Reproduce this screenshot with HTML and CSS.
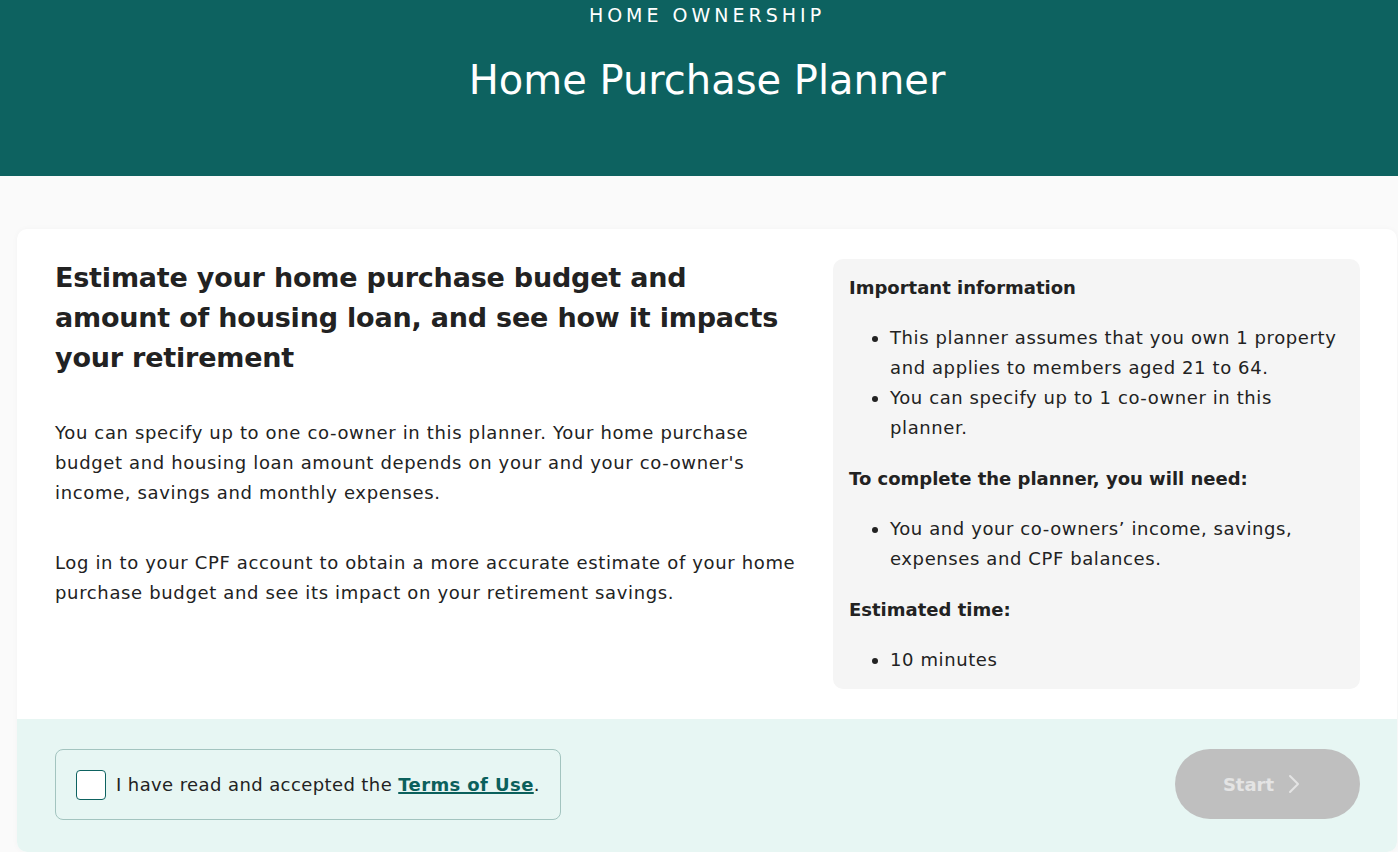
FILE: index.html
```html
<!DOCTYPE html>
<html lang="en">
<head>
    <meta charset="UTF-8">
    <meta name="viewport" content="width=device-width, initial-scale=1.0">
    <title>Home Purchase Planner</title>
    <link rel="stylesheet" href="styles.css">
</head>
<body>
    <header class="banner">
        <p class="eyebrow">HOME OWNERSHIP</p>
        <h1>Home Purchase Planner</h1>
    </header>

    <main class="page">
        <div class="card">
            <div class="cardBody">
                <section class="intro">
                    <h2>Estimate your home purchase budget and amount of housing loan, and see how it impacts your retirement</h2>
                    <p>You can specify up to one co-owner in this planner. Your home purchase budget and housing loan amount depends on your and your co-owner's income, savings and monthly expenses.</p>
                    <p>Log in to your CPF account to obtain a more accurate estimate of your home purchase budget and see its impact on your retirement savings.</p>
                </section>
                <aside class="infoBox">
                    <h3>Important information</h3>
                    <ul>
                        <li>This planner assumes that you own 1 property and applies to members aged 21 to 64.</li>
                        <li>You can specify up to 1 co-owner in this planner.</li>
                    </ul>
                    <h3>To complete the planner, you will need:</h3>
                    <ul>
                        <li>You and your co-owners&rsquo; income, savings, expenses and CPF balances.</li>
                    </ul>
                    <h3>Estimated time:</h3>
                    <ul>
                        <li>10 minutes</li>
                    </ul>
                </aside>
            </div>
            <div class="cardFooter">
                <label class="terms">
                    <span class="checkBox"></span>
                    <span>I have read and accepted the <a href="#">Terms of Use</a>.</span>
                </label>
                <button class="startButton" disabled>
                    Start
                    <svg width="12" height="20" viewBox="0 0 12 20"><path d="M2 2l8 8-8 8" fill="none" stroke="currentColor" stroke-width="2" stroke-linecap="round" stroke-linejoin="round"/></svg>
                </button>
            </div>
        </div>
    </main>
</body>
</html>
```

FILE: styles.css
```css
* {
    box-sizing: border-box;
}
body {
    margin: 0;
    background-color: #fafafa;
    font-family: "DejaVu Sans", "Noto Sans", sans-serif;
    color: #222;
}

.banner {
    background-color: #0d6260;
    color: #fff;
    text-align: center;
    height: 176px;
    padding: 4px 0 0 16px;
}
.eyebrow {
    margin: 0;
    font-size: 19px;
    letter-spacing: 4px;
    line-height: 22px;
}
.banner h1 {
    margin: 30px 0 0;
    font-size: 40px;
    font-weight: 400;
    line-height: 48px;
}

.page {
    padding: 53px 1px 0 17px;
}

.card {
    background-color: #fff;
    border-radius: 10px;
    overflow: hidden;
    box-shadow: 0 0 6px rgba(0, 0, 0, 0.03);
}

.cardBody {
    display: flex;
    gap: 32px;
    padding: 30px 37px 30px 38px;
}

.intro {
    flex: 1;
}
.intro h2 {
    margin: -1px 0 40px;
    font-size: 27px;
    font-weight: 700;
    line-height: 40px;
    letter-spacing: -0.2px;
}
.intro p {
    margin: 0 0 40px;
    font-size: 18px;
    line-height: 30px;
    letter-spacing: 0.65px;
}

.infoBox {
    width: 527px;
    background-color: #f5f5f5;
    border-radius: 10px;
    padding: 17px 16px 14px 16px;
}
.infoBox h3 {
    margin: 0;
    font-size: 18px;
    font-weight: 700;
    line-height: 24px;
}
.infoBox ul {
    margin: 23px 0 24px;
    padding-left: 41px;
    font-size: 18px;
    line-height: 30px;
    letter-spacing: 0.6px;
}
.infoBox ul:last-child {
    margin-bottom: 0;
}

.cardFooter {
    display: flex;
    justify-content: space-between;
    align-items: flex-start;
    background-color: #e7f6f3;
    padding: 30px 37px 32px 38px;
}

.terms {
    display: flex;
    align-items: center;
    gap: 10px;
    height: 71px;
    padding: 0 20px;
    border: 1px solid #a3c4bf;
    border-radius: 8px;
    font-size: 18px;
    letter-spacing: 0.4px;
}
.checkBox {
    width: 30px;
    height: 30px;
    background-color: #fff;
    border: 1px solid #0d6260;
    border-radius: 4px;
}
.terms a {
    color: #0b605c;
    font-weight: 700;
    text-decoration-thickness: 2px;
}

.startButton {
    display: flex;
    align-items: center;
    justify-content: center;
    gap: 14px;
    width: 185px;
    height: 70px;
    padding: 0 12px 0 0;
    border: none;
    border-radius: 35px;
    background-color: #bfbfbf;
    color: #e4e4e4;
    font-family: inherit;
    font-size: 18px;
    font-weight: 700;
}
```
